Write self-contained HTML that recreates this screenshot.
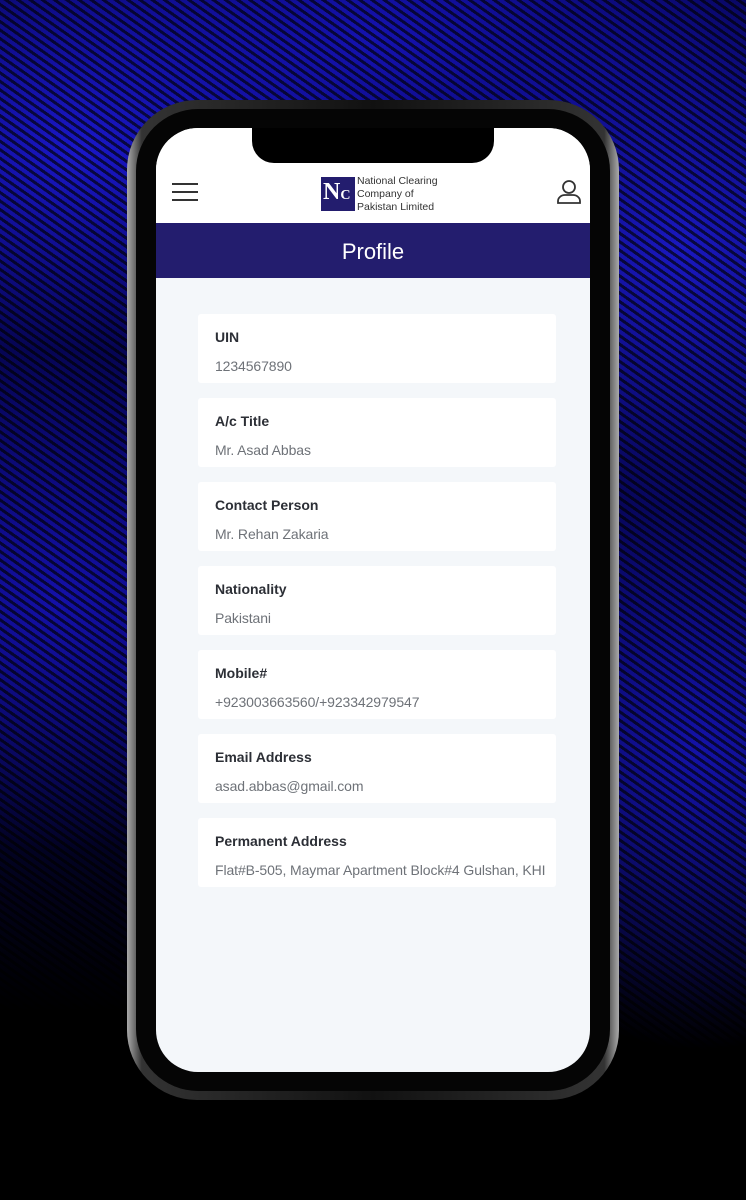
<!DOCTYPE html>
<html><head><meta charset="utf-8"><style>
*{margin:0;padding:0;box-sizing:border-box}
body{width:746px;height:1200px;overflow:hidden;background:#000;font-family:"Liberation Sans",sans-serif;position:relative}
.bg{position:absolute;left:0;top:0;width:746px;height:1100px;
background:
repeating-linear-gradient(35deg,rgba(0,0,0,.65) 0 3px,transparent 3px 7px),
radial-gradient(ellipse 300px 200px at 80px 150px,#1a17c8,transparent),
radial-gradient(ellipse 260px 260px at 680px 250px,#1a18c0,transparent),
radial-gradient(ellipse 300px 250px at 60px 600px,#1410a8,transparent),
radial-gradient(ellipse 260px 300px at 700px 750px,#1412a8,transparent),
radial-gradient(ellipse 400px 200px at 370px 40px,#1512b0,transparent),
linear-gradient(#080660,#05044a 60%,#000 92%)}
.frame{position:absolute;left:127px;top:100px;width:492px;height:1000px;border-radius:70px;background:linear-gradient(90deg,#aaa,#333 3%,#111 50%,#333 97%,#aaa);}
.frame2{position:absolute;left:136px;top:109px;width:474px;height:982px;border-radius:62px;background:#050505}
.screen{position:absolute;left:156px;top:128px;width:434px;height:944px;border-radius:42px;background:#f4f7fa;overflow:hidden}
.hdr{position:absolute;left:0;top:0;width:434px;height:95px;background:#fff}
.notch{position:absolute;left:96px;top:0;width:242px;height:35px;background:#000;border-radius:0 0 22px 22px}
.nav{position:absolute;left:0;top:95px;width:434px;height:55px;background:#231d6e;color:#fff;font-size:22px;text-align:center;line-height:58px}
.card{position:absolute;left:42px;width:358px;height:69px;background:#fff;border-radius:3px}
.card b{position:absolute;left:17px;top:15px;font-size:14px;color:#2c2f36}
.card span{position:absolute;left:17px;top:44px;font-size:14px;color:#6e7278;letter-spacing:-0.1px}
</style></head><body>
<div class="bg"></div>
<div class="frame"></div><div class="frame2"></div>
<div class="screen">
<div class="hdr">
<div style="position:absolute;left:16px;top:55px;width:26px;height:2px;background:#333;box-shadow:0 8px 0 #333,0 16px 0 #333"></div>
<div style="position:absolute;left:165px;top:49px;width:34px;height:34px;background:#231d6e;color:#fff;font-family:'Liberation Serif',serif;font-weight:bold;font-size:24px;line-height:30px;padding-left:2px">N<span style="font-size:14px">C</span></div>
<div style="position:absolute;left:201px;top:47px;font-size:10.5px;line-height:13px;color:#333">National Clearing<br>Company of<br>Pakistan Limited</div>
<svg style="position:absolute;left:400px;top:51px" width="26" height="26" viewBox="0 0 26 26" fill="none" stroke="#333" stroke-width="1.8"><circle cx="13" cy="8" r="6"/><path d="M2 24v-2c0-3 3-6 7-6h8c4 0 7 3 7 6v2z"/></svg>
</div>
<div class="notch"></div>
<div class="nav">Profile</div>
<div class="card" style="top:186px"><b>UIN</b><span>1234567890</span></div>
<div class="card" style="top:270px"><b>A/c Title</b><span>Mr. Asad Abbas</span></div>
<div class="card" style="top:354px"><b>Contact Person</b><span>Mr. Rehan Zakaria</span></div>
<div class="card" style="top:438px"><b>Nationality</b><span>Pakistani</span></div>
<div class="card" style="top:522px"><b>Mobile#</b><span>+923003663560/+923342979547</span></div>
<div class="card" style="top:606px"><b>Email Address</b><span>asad.abbas@gmail.com</span></div>
<div class="card" style="top:690px"><b>Permanent Address</b><span>Flat#B-505, Maymar Apartment Block#4 Gulshan, KHI</span></div>
</div>
</body></html>
